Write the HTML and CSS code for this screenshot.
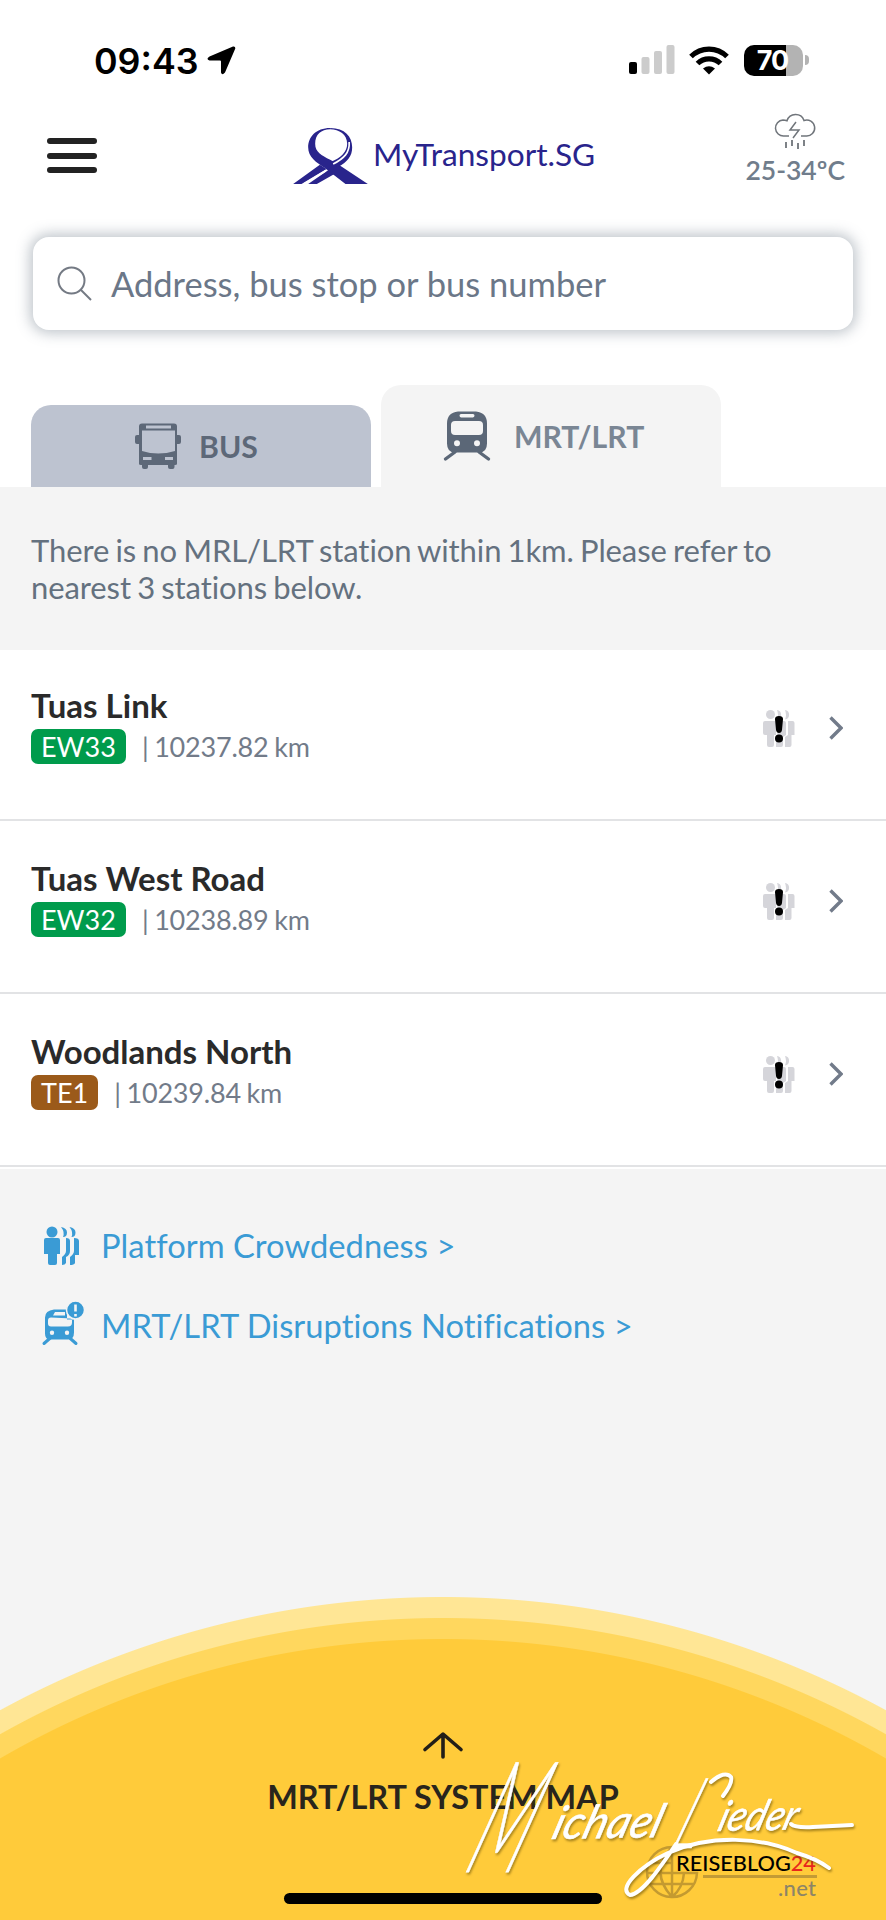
FILE: index.html
```html
<!DOCTYPE html>
<html lang="en">
<head>
    <meta charset="UTF-8">
    <meta name="viewport" content="width=device-width, initial-scale=1.0">
    <title>MyTransport.SG</title>
    <link rel="stylesheet" href="styles.css">
</head>
<body>
    <!-- shared icons -->
    <svg width="0" height="0" class="defs">
        <symbol id="crowd" viewBox="0 0 32 37">
            <g fill="#d5d5da">
                <circle cx="7.500" cy="4.500" r="4.500"/>
                <path d="M2 11h9.500q1.500 0 1.500 2v12h-2v10q0 2-2 2H6q-2 0-2-2V25H2q-2 0-2-2V13q0-2 2-2z"/>
                <path d="M14 0a4.800 4.800 0 0 1 0 9.500q2-4.500 0-9.500zM14.500 11H21q2 0 2 2v12l-3 2v8q0 2-2 2h-5V27l1.500-2z"/>
                <path d="M22 0a4.800 4.800 0 0 1 0 9.500q2-4.500 0-9.500zM25 11h4.500q2 0 2 2v12h-3v10q0 2-2 2H22V27l3-2z"/>
            </g>
            <path d="M12 9q0-3 4-3t4 3l-1 11q-.5 3-3 3t-3-3z"/>
            <circle cx="16" cy="28.500" r="4"/>
        </symbol>
        <symbol id="chevron" viewBox="0 0 14 24">
            <path d="M1.500 1.500L12 12 1.500 22.500" fill="none" stroke="#727b8a" stroke-width="3.400"/>
        </symbol>
    </svg>

    <div class="status">
        <span class="time">09:43</span>
        <svg class="location" width="29" height="29" viewBox="0 0 29 29"><path d="M26 .5q2.500-.5 2.300 2L18 26.500q-3 3.500-4 0V15.500q0-1-1-1H2.500q-4-1.500 0-4z"/></svg>
        <svg class="signal" width="46" height="30" viewBox="0 0 46 30">
            <rect x="0" y="17" width="8" height="12" rx="2"/>
            <g fill="#ccc">
                <rect x="12.500" y="12" width="8" height="17" rx="2"/>
                <rect x="25" y="6" width="8" height="23" rx="2"/>
                <rect x="37.500" y="0" width="8" height="29" rx="2"/>
            </g>
        </svg>
        <svg class="wifi" width="40" height="29" viewBox="0 0 40 29">
            <g fill="none" stroke="#000" stroke-width="5.200">
                <path d="M2 10.500a25.500 25.500 0 0 1 36 0"/>
                <path d="M8.500 17.500a16.500 16.500 0 0 1 23 0"/>
            </g>
            <path d="M20 28.500l-6-6q6-4.500 12 0z"/>
        </svg>
        <div class="battery"><span>70</span></div>
        <i class="battery-tip"></i>
    </div>

    <header class="header">
        <div class="menu"><i></i><i></i><i></i></div>
        <div class="brand">
            <svg width="75" height="56" viewBox="880 324 224 168" fill="#29248c">
                <path d="M991 324c-43 0-66 27-66 58 0 30 25 46 50 62l62 48h67l-94-62-19-11c-26-13-45-23-45-48 0-27 18-43 45-43z"/>
                <path d="M991 324c44 0 66 26 66 58 0 27-14 44-42 59l-24-15c32-12 51-31 51-55 0-27-24-43-51-43z"/>
                <path d="M880 492l80-58 20 13-75 45zM925 492l62-43 18 12-54 31z"/>
                <path d="M1048 366c2 32-15 49-48 66M912 492l66-40" fill="none" stroke="#fff" stroke-width="5"/>
            </svg>
            <span>MyTransport.SG</span>
        </div>
        <div class="weather">
            <svg width="40" height="37" viewBox="0 0 40 37" fill="none" stroke="#70757b" stroke-width="1.500">
                <path d="M14 24H9a8 8 0 0 1-1-16q2 0 4 .8A9 9 0 0 1 29 8.500 8 8 0 1 1 31 24h-5"/>
                <path d="M21 10l-6 8h9l-6 8"/>
                <path d="M11 30v6M17 28v6M23 31v6M29 28v6" stroke-width="1.800"/>
            </svg>
            <span>25-34ºC</span>
        </div>
    </header>

    <div class="search">
        <svg width="35" height="35" viewBox="0 0 35 35" fill="none" stroke="#747a84" stroke-width="2"><circle cx="14.500" cy="14.500" r="13"/><path d="M24 24l10 10"/></svg>
        <span>Address, bus stop or bus number</span>
    </div>

    <nav class="tabs">
        <div class="tab bus">
            <svg width="46" height="46" viewBox="0 0 46 46">
                <path fill="#5d6878" fill-rule="evenodd" d="M7 .5h32q3 0 3 3V12h2q2 0 2 2v5q0 2-2 2h-2v20q0 1-2 1h-.500v2q0 2-2 2H35q-2 0-2-2v-2H13v2q0 2-2 2H9q-2 0-2-2v-2H6q-2 0-2-1V21H2q-2 0-2-2v-5q0-2 2-2h2V3.500q0-3 3-3zM11 2.500v3h25v-3zM7 7.500V28q16 5 33 0V7.500zM8 34v3h8.500v-3zm22 0v3H38v-3z"/>
            </svg>
            <span>BUS</span>
        </div>
        <div class="tab mrt active">
            <svg width="46" height="50" viewBox="0 0 46 50">
                <path d="M11 41L1.500 48M35 41l9.500 7" stroke="#5b6777" stroke-width="3.400" stroke-linecap="round"/>
                <path fill="#5b6777" fill-rule="evenodd" d="M14 .5h18q11 1 11 12v20q0 9-8 9H11q-8 0-8-9v-20q0-11 11-12zM17 3q-1.500 0-1.500 1.500t1.500 2h12q1.500-.5 1.500-2T29 3zM11 10q-4 0-4 4v6q0 4 4 4h24q4 0 4-4v-6q0-4-4-4zM13 29.300a3 3 0 1 0 0 6 3 3 0 0 0 0-6zm20 0a3 3 0 1 0 0 6 3 3 0 0 0 0-6z"/>
            </svg>
            <span>MRT/LRT</span>
        </div>
    </nav>

    <p class="notice">There is no MRL/LRT station within 1km. Please refer to nearest 3 stations below.</p>

    <div class="stations">
        <div class="station">
            <div class="info">
                <h2>Tuas Link</h2>
                <div class="meta"><span class="code ew">EW33</span><span class="km">| 10237.82 km</span></div>
            </div>
            <svg class="crowd" width="32" height="37"><use href="#crowd"/></svg>
            <svg class="chevron" width="14" height="24"><use href="#chevron"/></svg>
        </div>
        <div class="station">
            <div class="info">
                <h2>Tuas West Road</h2>
                <div class="meta"><span class="code ew">EW32</span><span class="km">| 10238.89 km</span></div>
            </div>
            <svg class="crowd" width="32" height="37"><use href="#crowd"/></svg>
            <svg class="chevron" width="14" height="24"><use href="#chevron"/></svg>
        </div>
        <div class="station">
            <div class="info">
                <h2>Woodlands North</h2>
                <div class="meta"><span class="code te">TE1</span><span class="km">| 10239.84 km</span></div>
            </div>
            <svg class="crowd" width="32" height="37"><use href="#crowd"/></svg>
            <svg class="chevron" width="14" height="24"><use href="#chevron"/></svg>
        </div>
    </div>

    <div class="links">
        <a class="link">
            <svg width="43" height="44" viewBox="0 0 43 44" fill="#3a9bd5">
                <circle cx="10" cy="9" r="5.500"/>
                <path d="M4 15h12q2 0 2 2v14h-3v9q0 2-2 2H8q-2 0-2-2v-9H2V17q0-2 2-2z"/>
                <path d="M19 4q6 1 6 5.500T21 14q2-5-2-10zM24 15q4 0 4 3v10q0 4-4 6v6q-1 2-4 2v-8q4-3 4-6zM27.500 4q6 1 6 5.500t-4 4.500q2-5-2-10zM32 15q5 0 5 3v14h-4v8q-1 2-5 2v-8q4-3 4-6z"/>
            </svg>
            <span>Platform Crowdedness &gt;</span>
        </a>
        <a class="link">
            <svg width="43" height="44" viewBox="0 1.500 43 44">
                <path d="M10 35l-8 7M26 35l8 7" stroke="#3a9bd5" stroke-width="3" stroke-linecap="round"/>
                <path fill="#3a9bd5" fill-rule="evenodd" d="M12 8h13v10h7v13q0 7-6 7H8q-5 0-5-6V16q0-7 9-8zM13 10.500L11 14h12v-3.500zM9 16q-3 0-3 3v3q0 3 3 3h17q4 0 4-4v-4zM10 29a2.200 2.200 0 1 0 0 4.400 2.200 2.200 0 0 0 0-4.400zm15 0a2.200 2.200 0 1 0 0 4.400 2.200 2.200 0 0 0 0-4.400z"/>
                <circle cx="33.500" cy="8.500" r="9" fill="#3a9bd5" stroke="#f4f4f4" stroke-width="1.500"/>
                <path d="M33.500 3v7M33.500 12.500v2.500" stroke="#f4f4f4" stroke-width="2.600"/>
            </svg>
            <span>MRT/LRT Disruptions Notifications &gt;</span>
        </a>
    </div>

    <footer class="map">
        <svg class="arrow" width="40" height="27" viewBox="0 0 40 27" fill="none" stroke="#231f18" stroke-width="3.600" stroke-linecap="round" stroke-linejoin="round"><path d="M2 17.500L20 2l18 15.500M20 3v22"/></svg>
        <span>MRT/LRT SYSTEM MAP</span>
        <div class="home"></div>
    </footer>

    <!-- watermark over the footer -->
    <svg class="watermark" width="446" height="190" viewBox="0 0 446 190">
        <g fill="none" stroke="#c49a30" stroke-width="2.500">
            <path d="M232 117a25 25 0 1 0 25 26h-25zM232 117v50M209 133h23M207 143h50M210 154h43M232 117q-23 25 0 50M244 143q-1 15-12 24"/>
        </g>
        <path d="M263 146.500h114" stroke="#c39b35" stroke-width="3"/>
        <text class="site" x="236" y="141" textLength="140" lengthAdjust="spacingAndGlyphs">REISEBLOG<tspan class="num">24</tspan></text>
        <text class="net" x="338" y="165.500" textLength="38">.net</text>
        <g class="signature">
            <text class="capital" transform="matrix(.66 0 -.62 1.550 22 142)" font-size="100">M</text>
            <text transform="translate(110 109) rotate(-1) skewX(-18)" font-size="46" textLength="108" lengthAdjust="spacingAndGlyphs">ichael</text>
            <text class="capital" transform="translate(230 118) skewX(-22)" font-size="98" textLength="24" lengthAdjust="spacingAndGlyphs">L</text>
            <text transform="translate(276 101) rotate(-1) skewX(-18)" font-size="42" textLength="78" lengthAdjust="spacingAndGlyphs">ieder</text>
            <g fill="none" stroke="#fff" stroke-width="4" stroke-linecap="round">
                <path d="M351 94q4 4 22 3l39-2"/>
                <path d="M271 52q14-12 20-5 2 6-8 19"/>
                <path d="M236 114c-16 24-34 50-46 51-13-6 10-29 38-42 43-19 94-16 129 0q20 6 32 15"/>
            </g>
        </g>
    </svg>
</body>
</html>
```

FILE: styles.css
```css
*{box-sizing: border-box;}
body{
    margin: 0;
    width: 886px;
    height: 1920px;
    position: relative;
    overflow: hidden;
    display: flex;
    flex-direction: column;
    background-color: #f4f4f4;
    font-family: "Lato", sans-serif;
    color: #64717f;
}
svg{display: block; flex-shrink: 0; overflow: visible;}
.defs{position: absolute;}

/* status bar */
.status{
    height: 108px;
    padding: 12px 77px 0 94px;
    display: flex;
    align-items: center;
    background: #fff;
    color: #000;
}
.time{
    font: 600 35.8px "Inter", sans-serif;
    width: 113px;
    padding-top: 1px;
    white-space: nowrap;
}
.signal{margin-left: auto; margin-right: 14px;}
.wifi{margin-right: 15px;}
.battery{
    width: 59px;
    height: 31px;
    border-radius: 10px;
    background: linear-gradient(to right, #000 42px, #b3b3b3 42px);
    padding-right: 2px;
    text-align: center;
    color: #fff;
    font: 700 27px/31px "Inter", sans-serif;
    letter-spacing: -1px;
}
.battery-tip{
    width: 4px;
    height: 10px;
    margin-left: 2px;
    border-radius: 0 5px 5px 0;
    background: #b3b3b3;
}

/* header */
.header{
    height: 95px;
    padding: 0 41px 0 47px;
    display: flex;
    align-items: center;
    background: #fff;
}
.menu{width: 246px; display: grid; gap: 8.5px;}
.menu i{width: 50px; height: 6px; border-radius: 3px; background: #222;}
.brand{
    display: flex;
    align-items: center;
    gap: 5px;
    color: #29248c;
    font-size: 31.6px;
    white-space: nowrap;
}
.brand span{padding-bottom: 4px;}
.weather{
    margin-left: auto;
    padding-bottom: 9px;
    display: flex;
    flex-direction: column;
    align-items: center;
    font-weight: 600;
    font-size: 26.5px;
    line-height: 42px;
    color: #707d8c;
}

.search{
    height: 93px;
    margin: 34px 33px 55px;
    padding-left: 24px;
    display: flex;
    align-items: center;
    gap: 19px;
    border-radius: 16px;
    background: #fff;
    box-shadow: 0 0 14px 3px rgba(90, 105, 120, 0.4);
    font-size: 34.5px;
    color: #6b7788;
}

/* white page area down to the tabs */
body::before{
    content: "";
    position: absolute;
    z-index: -1;
    width: 886px;
    height: 487px;
    background: #fff;
}

.tabs{
    height: 102px;
    padding-left: 31px;
    display: flex;
    align-items: flex-end;
    gap: 10px;
    font-size: 30.2px;
    font-weight: 700;
}
.tab{
    width: 340px;
    height: 82px;
    display: flex;
    align-items: center;
    border-radius: 20px 20px 0 0;
}
.bus{
    padding-left: 104px;
    gap: 18px;
    background: #bdc3d0;
    color: #5d6878;
}
.mrt{
    height: 102px;
    padding-left: 63px;
    gap: 24px;
    background: #f4f4f4;
    color: #7a8694;
}

.notice{
    margin: 0;
    height: 163px;
    padding: 45px 80px 0 31px;
    font-size: 31px;
    line-height: 37px;
    letter-spacing: -0.1px;
    word-spacing: -1.6px;
}

/* station list */
.stations{background: #fff; padding-bottom: 2px;}
.station{
    height: 173px;
    padding: 38px 43px 0 31px;
    display: flex;
    border-bottom: 2px solid #e2e3e5;
}
.station:first-child{height: 171px; padding-top: 36px;}
.info{flex: 1;}
.station h2{
    margin: 0;
    font-size: 33px;
    line-height: 38px;
    height: 43px;
    color: #2a2a2a;
}
.meta{display: flex; align-items: center; gap: 16px;}
.code{
    height: 35px;
    padding: 0 10px;
    border-radius: 7px;
    font-size: 27px;
    line-height: 35px;
    color: #fff;
}
.ew{background: #009b4c;}
.te{background: #9b5a1a;}
.km{
    font-size: 27px;
    line-height: 35px;
    letter-spacing: -0.2px;
    word-spacing: -1px;
    color: #727b89;
}
.crowd{margin-top: 24px; margin-right: 34px;}
.chevron{margin-top: 30px;}

.links{
    padding: 54px 0 0 42px;
    display: grid;
    gap: 36px;
}
.link{
    height: 44px;
    display: flex;
    align-items: center;
    gap: 16px;
    font-size: 32.7px;
    letter-spacing: 0.05px;
    color: #3a9bd5;
}

/* system map button, three concentric discs */
.map{
    height: 323px;
    margin-top: auto;
    padding-top: 135px;
    display: flex;
    flex-direction: column;
    align-items: center;
    background: radial-gradient(circle at 443px 923px, #ffcb3a 880.5px, #ffd75e 881.5px, #ffd75e 901.5px, #ffe695 902.5px, #ffe695 922.5px, transparent 923.5px);
    font-size: 32.4px;
    line-height: 40px;
    font-weight: 700;
    color: #29251c;
}
.map span{margin-top: 18px;}
.home{
    width: 318px;
    height: 11px;
    margin-top: 76px;
    border-radius: 6px;
    background: #000;
}

/* watermark */
.watermark{position: absolute; left: 440px; top: 1730px;}
.site{font: 500 21px "Lato", sans-serif;}
.num{fill: #e8261c;}
.net{font: 500 22px "Lato", sans-serif; fill: #8d8567;}
.signature{
    fill: #fff;
    stroke: #fff;
    stroke-width: 0.6px;
    font-family: "Lato", sans-serif;
    font-style: italic;
    filter: drop-shadow(1px 2px 1px rgba(80, 60, 0, 0.5));
}
.capital{font-weight: 300;}
```
